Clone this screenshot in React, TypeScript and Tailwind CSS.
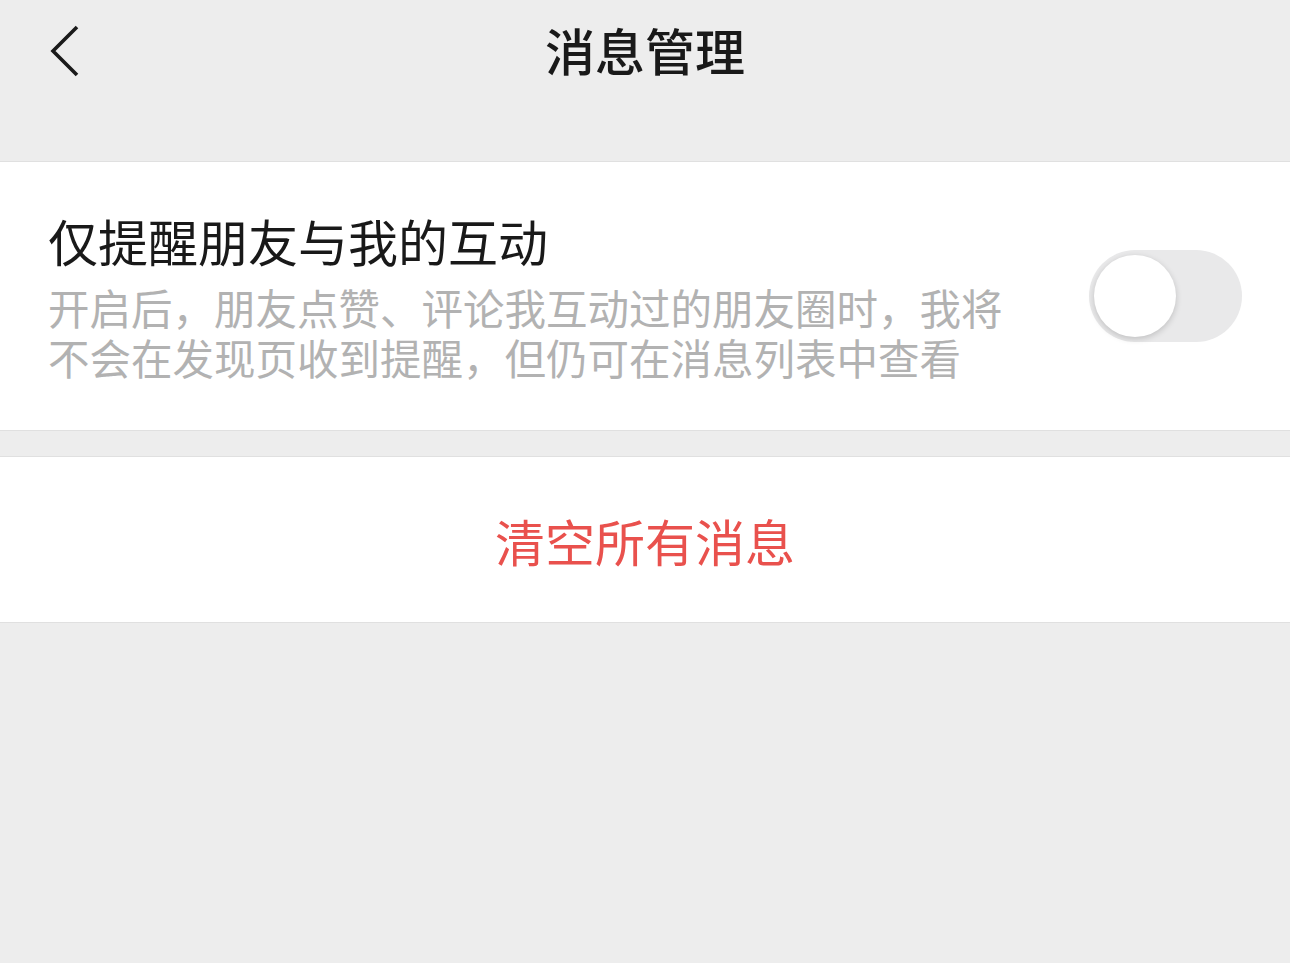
const font = { fontFamily: '"Noto Sans CJK SC", "Noto Sans", sans-serif' };

const App = () => {
  return (
    <main
      className="min-h-screen w-full bg-[#ededed] text-[#191919]"
      style={font}
    >
      <header className="h-[162px] border-b border-[#e0e0e0]">
        <div className="relative flex h-[98px] items-center justify-center">
          <button className="absolute left-[46px] top-[24px] flex h-[54px] w-[36px] items-center justify-center">
            <svg width="32" height="52" viewBox="0 0 32 52" fill="none">
              <path
                d="M29 2 L5 26 L29 50"
                stroke="#1a1a1a"
                strokeWidth="3.6"
                strokeLinecap="butt"
                strokeLinejoin="miter"
              />
            </svg>
          </button>
          <h1 className="text-[50px] font-medium leading-none">消息管理</h1>
        </div>
      </header>

      <section className="flex items-center justify-between border-b border-[#e0e0e0] bg-white py-12 pl-[48px] pr-[48px]">
        <div>
          <h2 className="text-[50px] leading-[60px]">仅提醒朋友与我的互动</h2>
          <p className="mt-[12px] w-[990px] text-[41.5px] leading-[50px] text-[#b2b2b2]">
            开启后，朋友点赞、评论我互动过的朋友圈时，我将不会在发现页收到提醒，但仍可在消息列表中查看
          </p>
        </div>
        <div className="relative h-[92px] w-[153px] shrink-0 rounded-full bg-[#e9e9ea]">
          <div className="absolute left-[5px] top-[5px] h-[82px] w-[82px] rounded-full bg-white shadow-[0_2px_6px_rgba(0,0,0,0.18)]" />
        </div>
      </section>

      <div className="h-[25px]" />

      <section className="flex h-[167px] items-center justify-center border-y border-[#e0e0e0] bg-white">
        <button className="text-[50px] leading-none text-[#e9514d]">
          清空所有消息
        </button>
      </section>
    </main>
  );
};

export default App;
